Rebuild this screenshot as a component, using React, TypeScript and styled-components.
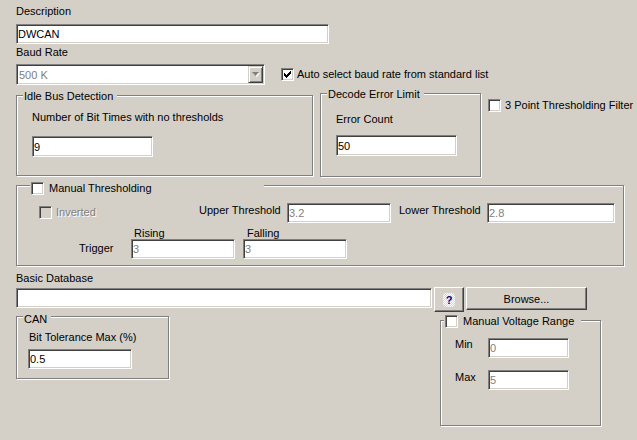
import React from "react";
import styled, { createGlobalStyle } from "styled-components";

const GlobalStyle = createGlobalStyle`
  * { box-sizing: border-box; }
  html, body { margin: 0; padding: 0; background: #d4d0c8; }
  body {
    font-family: "Liberation Sans", Arial, sans-serif;
    font-size: 11px;
    color: #000;
  }
`;

const Dialog = styled.div`
  width: 637px;
  height: 440px;
  padding: 5px 0 0 16px;
  display: flex;
  flex-direction: column;
  overflow: hidden;
`;

const Row = styled.div<{ $mt?: number }>`
  display: flex;
  align-items: flex-start;
  margin-top: ${(p) => p.$mt ?? 0}px;
`;

const Label = styled.div<{ $mt?: number; $ml?: number; $w?: number; $pl?: number }>`
  height: 13px;
  line-height: 13px;
  white-space: nowrap;
  flex: none;
  margin-top: ${(p) => p.$mt ?? 0}px;
  margin-left: ${(p) => p.$ml ?? 0}px;
  padding-left: ${(p) => p.$pl ?? 0}px;
  ${(p) => (p.$w ? `width: ${p.$w}px;` : "")}
`;

const Field = styled.input<{ $w: number; $h?: number; $dim?: boolean; $mt?: number; $ml?: number }>`
  flex: none;
  width: ${(p) => p.$w}px;
  height: ${(p) => p.$h ?? 20}px;
  margin: ${(p) => p.$mt ?? 0}px 0 0 ${(p) => p.$ml ?? 0}px;
  padding: 0 2px 0 1px;
  border: 1px solid;
  border-color: #808080 #fff #fff #808080;
  box-shadow: inset 1px 1px 0 #404040, inset -1px -1px 0 #d4d0c8;
  background: #fff;
  font: inherit;
  color: ${(p) => (p.$dim ? "#808080" : "#000")};
  outline: none;
`;

const Combo = styled.div`
  flex: none;
  width: 249px;
  height: 21px;
  display: flex;
  align-items: center;
  justify-content: space-between;
  padding: 1px 1px 1px 1px;
  border: 1px solid;
  border-color: #808080 #fff #fff #808080;
  box-shadow: inset 1px 1px 0 #404040, inset -1px -1px 0 #d4d0c8;
  background: #fff;
  color: #808080;
  span:first-child {
    padding-left: 1px;
  }
`;

const ComboButton = styled.span`
  width: 15px;
  height: 17px;
  display: flex;
  align-items: center;
  justify-content: center;
  background: #d4d0c8;
  border: 1px solid;
  border-color: #d4d0c8 #404040 #404040 #d4d0c8;
  box-shadow: inset 1px 1px 0 #fff, inset -1px -1px 0 #808080;
`;

const Box = styled.span<{ $disabled?: boolean }>`
  flex: none;
  width: 13px;
  height: 13px;
  display: flex;
  align-items: center;
  justify-content: center;
  border: 1px solid;
  border-color: #808080 #fff #fff #808080;
  box-shadow: inset 1px 1px 0 #404040, inset -1px -1px 0 #d4d0c8;
  background: ${(p) => (p.$disabled ? "#d4d0c8" : "#fff")};
`;

const Check = styled.label<{ $disabled?: boolean; $w?: number; $ml?: number; $mt?: number; $gap?: number }>`
  flex: none;
  display: flex;
  align-items: center;
  gap: ${(p) => p.$gap ?? 4}px;
  height: 13px;
  line-height: 13px;
  white-space: nowrap;
  margin-top: ${(p) => p.$mt ?? 0}px;
  margin-left: ${(p) => p.$ml ?? 0}px;
  ${(p) => (p.$w ? `width: ${p.$w}px;` : "")}
  color: ${(p) => (p.$disabled ? "#808080" : "#000")};
  text-shadow: ${(p) => (p.$disabled ? "1px 1px 0 #fff" : "none")};
`;

const Group = styled.div<{ $w: number; $h: number; $mt?: number; $ml?: number; $pt?: number; $pl?: number }>`
  position: relative;
  flex: none;
  display: flex;
  flex-direction: column;
  align-items: flex-start;
  width: ${(p) => p.$w}px;
  height: ${(p) => p.$h}px;
  margin-top: ${(p) => p.$mt ?? 0}px;
  margin-left: ${(p) => p.$ml ?? 0}px;
  padding: ${(p) => p.$pt ?? 0}px 0 0 ${(p) => p.$pl ?? 0}px;
  border: 1px solid #808080;
  box-shadow: inset 1px 1px 0 #fff, 1px 1px 0 #fff;
`;

const Legend = styled.div<{ $left?: number; $top?: number; $w?: number }>`
  position: absolute;
  left: ${(p) => p.$left ?? 6}px;
  top: ${(p) => p.$top ?? -6}px;
  height: 13px;
  line-height: 13px;
  padding: 0 4px 0 1px;
  display: flex;
  align-items: center;
  gap: 5px;
  white-space: nowrap;
  background: #d4d0c8;
  ${(p) => (p.$w ? `width: ${p.$w}px;` : "")}
`;

const FieldCol = styled.div<{ $ml?: number; $pl?: number }>`
  flex: none;
  display: flex;
  flex-direction: column;
  margin-left: ${(p) => p.$ml ?? 0}px;
  ${Label} {
    height: 12px;
    padding-left: ${(p) => p.$pl ?? 0}px;
  }
`;

const Button = styled.button<{ $w: number; $h: number; $ml?: number }>`
  flex: none;
  width: ${(p) => p.$w}px;
  height: ${(p) => p.$h}px;
  margin-left: ${(p) => p.$ml ?? 0}px;
  padding: 0;
  display: flex;
  align-items: center;
  justify-content: center;
  background: #d4d0c8;
  border: 1px solid;
  border-color: #fff #404040 #404040 #fff;
  box-shadow: inset -1px -1px 0 #808080;
  font: inherit;
  color: #000;
`;

const HelpIcon = styled.span`
  width: 12px;
  height: 14px;
  display: flex;
  align-items: center;
  justify-content: center;
  border-radius: 4px;
  background-image: conic-gradient(#f4f400 25%, #fff 0 50%, #f4f400 0 75%, #fff 0);
  background-size: 2px 2px;
  color: #000080;
  font-weight: bold;
  font-size: 11px;
  line-height: 14px;
`;

const CheckMark = () => (
  <svg width="7" height="7" viewBox="0 0 7 7">
    <path d="M0 2h1v1h1v1h1V3h1V2h1V1h1V0h1v3H6v1H5v1H4v1H3v1H2V6H1V5H0z" fill="#000" />
  </svg>
);

const DownArrow = () => (
  <svg width="8" height="5" viewBox="0 0 8 5">
    <path d="M1 1h7L4.5 5z" fill="#fff" />
    <path d="M0 0h7L3.5 4z" fill="#808080" />
  </svg>
);

export default function App() {
  return (
    <>
      <GlobalStyle />
      <Dialog>
        <Label>Description</Label>
        <Field $w={313} $mt={6} readOnly value="DWCAN" />
        <Label $mt={2}>Baud Rate</Label>
        <Row $mt={5}>
          <Combo>
            <span>500 K</span>
            <ComboButton>
              <DownArrow />
            </ComboButton>
          </Combo>
          <Check $ml={16} $mt={4} $gap={3}>
            <Box>
              <CheckMark />
            </Box>
            Auto select baud rate from standard list
          </Check>
        </Row>

        <Row $mt={8}>
          <Group $w={297} $h={81} $mt={2} $pt={15} $pl={15}>
            <Legend>Idle Bus Detection</Legend>
            <Label>Number of Bit Times with no thresholds</Label>
            <Field $w={121} $h={21} $mt={12} readOnly value="9" />
          </Group>
          <Group $w={161} $h={84} $ml={7} $pt={19} $pl={15}>
            <Legend>Decode Error Limit</Legend>
            <Label>Error Count</Label>
            <Field $w={121} $h={21} $mt={9} readOnly value="50" />
          </Group>
          <Check $ml={7} $mt={6}>
            <Box />
            3 Point Thresholding Filter
          </Check>
        </Row>

        <Group $w={608} $h={81} $mt={8} $pt={17}>
          <Legend $left={13} $top={-4} $w={234}>
            <Box />
            Manual Thresholding
          </Legend>
          <Row>
            <Check $disabled $ml={22} $mt={3} $w={160}>
              <Box $disabled />
              Inverted
            </Check>
            <Label $w={88} $mt={1}>Upper Threshold</Label>
            <Field $w={104} $dim readOnly value="3.2" />
            <Label $w={88} $ml={8} $mt={1}>Lower Threshold</Label>
            <Field $w={128} $dim readOnly value="2.8" />
          </Row>
          <Row $mt={4}>
            <Label $ml={62} $w={52} $mt={15}>Trigger</Label>
            <FieldCol $pl={3}>
              <Label>Rising</Label>
              <Field $w={104} $dim readOnly value="3" />
            </FieldCol>
            <FieldCol $ml={8} $pl={4}>
              <Label>Falling</Label>
              <Field $w={104} $dim readOnly value="3" />
            </FieldCol>
          </Row>
        </Group>

        <Label $mt={6}>Basic Database</Label>
        <Row $mt={2}>
          <Field $w={416} $mt={1} readOnly value="" />
          <Button $w={30} $h={25} $ml={2}>
            <HelpIcon>?</HelpIcon>
          </Button>
          <Button $w={121} $h={23} $ml={2}>
            Browse...
          </Button>
        </Row>

        <Row $mt={4}>
          <Group $w={153} $h={63} $pt={14} $pl={12}>
            <Legend $top={-4}>CAN</Legend>
            <Label>Bit Tolerance Max (%)</Label>
            <Field $w={104} $mt={5} $ml={-1} readOnly value="0.5" />
          </Group>
          <Group $w={161} $h={106} $ml={271} $mt={4} $pt={17}>
            <Legend $left={3} $top={-6} $w={137}>
              <Box />
              Manual Voltage Range
            </Legend>
            <Row>
              <Label $ml={14} $w={33}>Min</Label>
              <Field $w={81} $dim readOnly value="0" />
            </Row>
            <Row $mt={12}>
              <Label $ml={14} $w={33} $mt={1}>Max</Label>
              <Field $w={81} $dim readOnly value="5" />
            </Row>
          </Group>
        </Row>
      </Dialog>
    </>
  );
}
